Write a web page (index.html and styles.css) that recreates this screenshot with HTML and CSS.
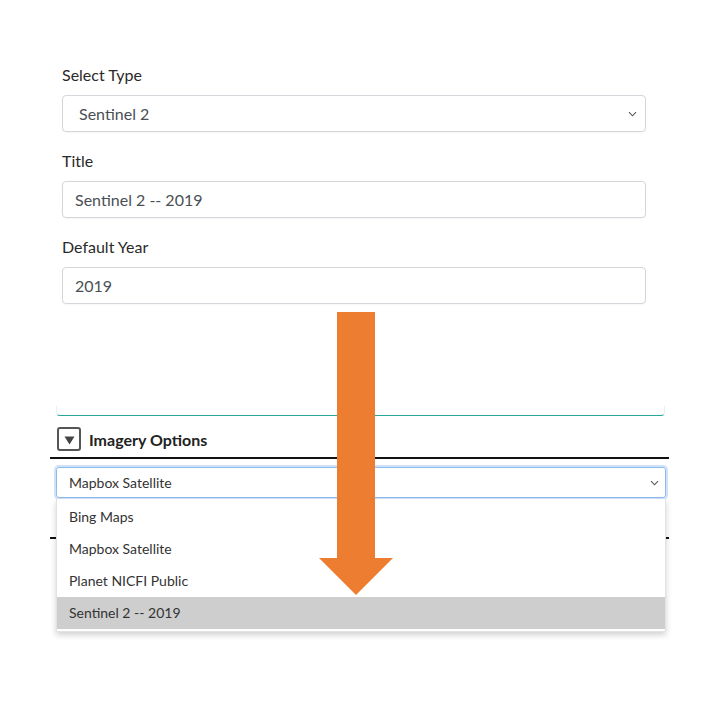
FILE: index.html
```html
<!DOCTYPE html>
<html>
<head>
<meta charset="utf-8">
<link rel="stylesheet" href="styles.css">
</head>
<body>
<div class="page">
  <div class="form">
    <div class="group">
      <div class="label">Select Type</div>
      <div class="control select">
        <span class="sel-text">Sentinel 2</span>
        <svg class="chev" width="9" height="6" viewBox="0 0 9 6"><path d="M1 1.2 L4.5 4.8 L8 1.2" fill="none" stroke="#555" stroke-width="1.1"/></svg>
      </div>
    </div>
    <div class="group">
      <div class="label">Title</div>
      <div class="control">Sentinel 2 -- 2019</div>
    </div>
    <div class="group">
      <div class="label">Default Year</div>
      <div class="control">2019</div>
    </div>
  </div>

  <div class="panel-end"></div>

  <div class="section">
    <div class="sec-head">
      <span class="toggle"><svg width="11" height="9" viewBox="0 0 11 9"><path d="M0.5 0.5 H10.5 L5.5 8.5 Z" fill="#444"/></svg></span>
      <span class="sec-title">Imagery Options</span>
    </div>
    <div class="select-wrap">
      <div class="mini-select">
        <span>Mapbox Satellite</span>
        <svg class="chev2" width="9" height="6" viewBox="0 0 9 6"><path d="M1 1.2 L4.5 4.8 L8 1.2" fill="none" stroke="#555" stroke-width="1.1"/></svg>
      </div>
      <ul class="dropdown">
        <li>Bing Maps</li>
        <li>Mapbox Satellite</li>
        <li>Planet NICFI Public</li>
        <li class="active">Sentinel 2 -- 2019</li>
      </ul>
    </div>
    <div class="next-head"></div>
  </div>

  <svg class="arrow" width="74" height="283" viewBox="0 0 74 283">
    <rect x="18" y="0" width="38" height="247" fill="#ED7D31"/>
    <polygon points="0,246 74,246 37,283" fill="#ED7D31"/>
  </svg>
</div>
</body>
</html>
```

FILE: styles.css
```css
* { box-sizing: border-box; }
html, body { margin: 0; padding: 0; background: #fff; }
body {
  font-family: Lato, "Noto Sans", sans-serif;
  color: #212529;
  width: 720px;
  height: 720px;
  overflow: hidden;
}
.page { position: relative; width: 720px; height: 720px; }

.form { padding: 63px 74px 0 62px; }
.group { margin-bottom: 17px; }
.group:last-child { margin-bottom: 0; }
.label {
  font-size: 16px;
  line-height: 24px;
  margin-bottom: 8px;
  color: #2a2a2a;
}
.control {
  height: 37px;
  border: 1px solid #d3d6da;
  border-radius: 4px;
  padding: 0 12px;
  display: flex;
  align-items: center;
  font-size: 16px;
  color: #4a4f55;
  box-shadow: 0 1px 2px rgba(0,0,0,0.04);
}
.select { justify-content: space-between; padding: 0 8px 0 16px; }
.chev { flex: none; }

.panel-end {
  margin: 102px 55px 0 56px;
  height: 10px;
  border-bottom: 1px solid #26a69a;
  border-left: 1px solid #e3f2f0;
  border-right: 1px solid #e3f2f0;
  border-radius: 0 0 4px 4px;
}

.section { margin: 0 51px 0 50px; }
.sec-head {
  display: flex;
  align-items: center;
  padding: 11px 0 6px 7px;
  border-bottom: 2px solid #111;
}
.toggle {
  width: 24px;
  height: 24px;
  border: 2px solid #555;
  border-radius: 3px;
  display: flex;
  align-items: center;
  justify-content: center;
  padding-top: 2px;
}
.sec-title {
  margin-left: 8px;
  font-size: 16px;
  font-weight: 700;
  color: #222;
}

.select-wrap { position: relative; margin: 8px 3px 0 6px; }
.mini-select {
  height: 31px;
  border: 1px solid #8dbdf0;
  border-radius: 3px;
  box-shadow: 0 0 0 2px rgba(120,170,235,0.35);
  display: flex;
  align-items: center;
  justify-content: space-between;
  padding: 0 6px 0 12px;
  font-size: 14px;
  color: #333;
}
.dropdown {
  position: absolute;
  left: 0;
  right: 0;
  top: 32px;
  margin: 0;
  padding: 2px 0 2px;
  list-style: none;
  background: #fff;
  border: 1px solid #e2e2e2;
  border-top: none;
  box-shadow: 0 3px 6px rgba(0,0,0,0.18);
  z-index: 2;
}
.dropdown li {
  height: 32px;
  line-height: 32px;
  padding-left: 12px;
  font-size: 14px;
  color: #333;
}
.dropdown li.active { background: #cecece; }

.next-head {
  height: 41px;
  border-bottom: 2px solid #111;
}

.arrow {
  position: absolute;
  left: 319px;
  top: 312px;
  z-index: 5;
}
```
